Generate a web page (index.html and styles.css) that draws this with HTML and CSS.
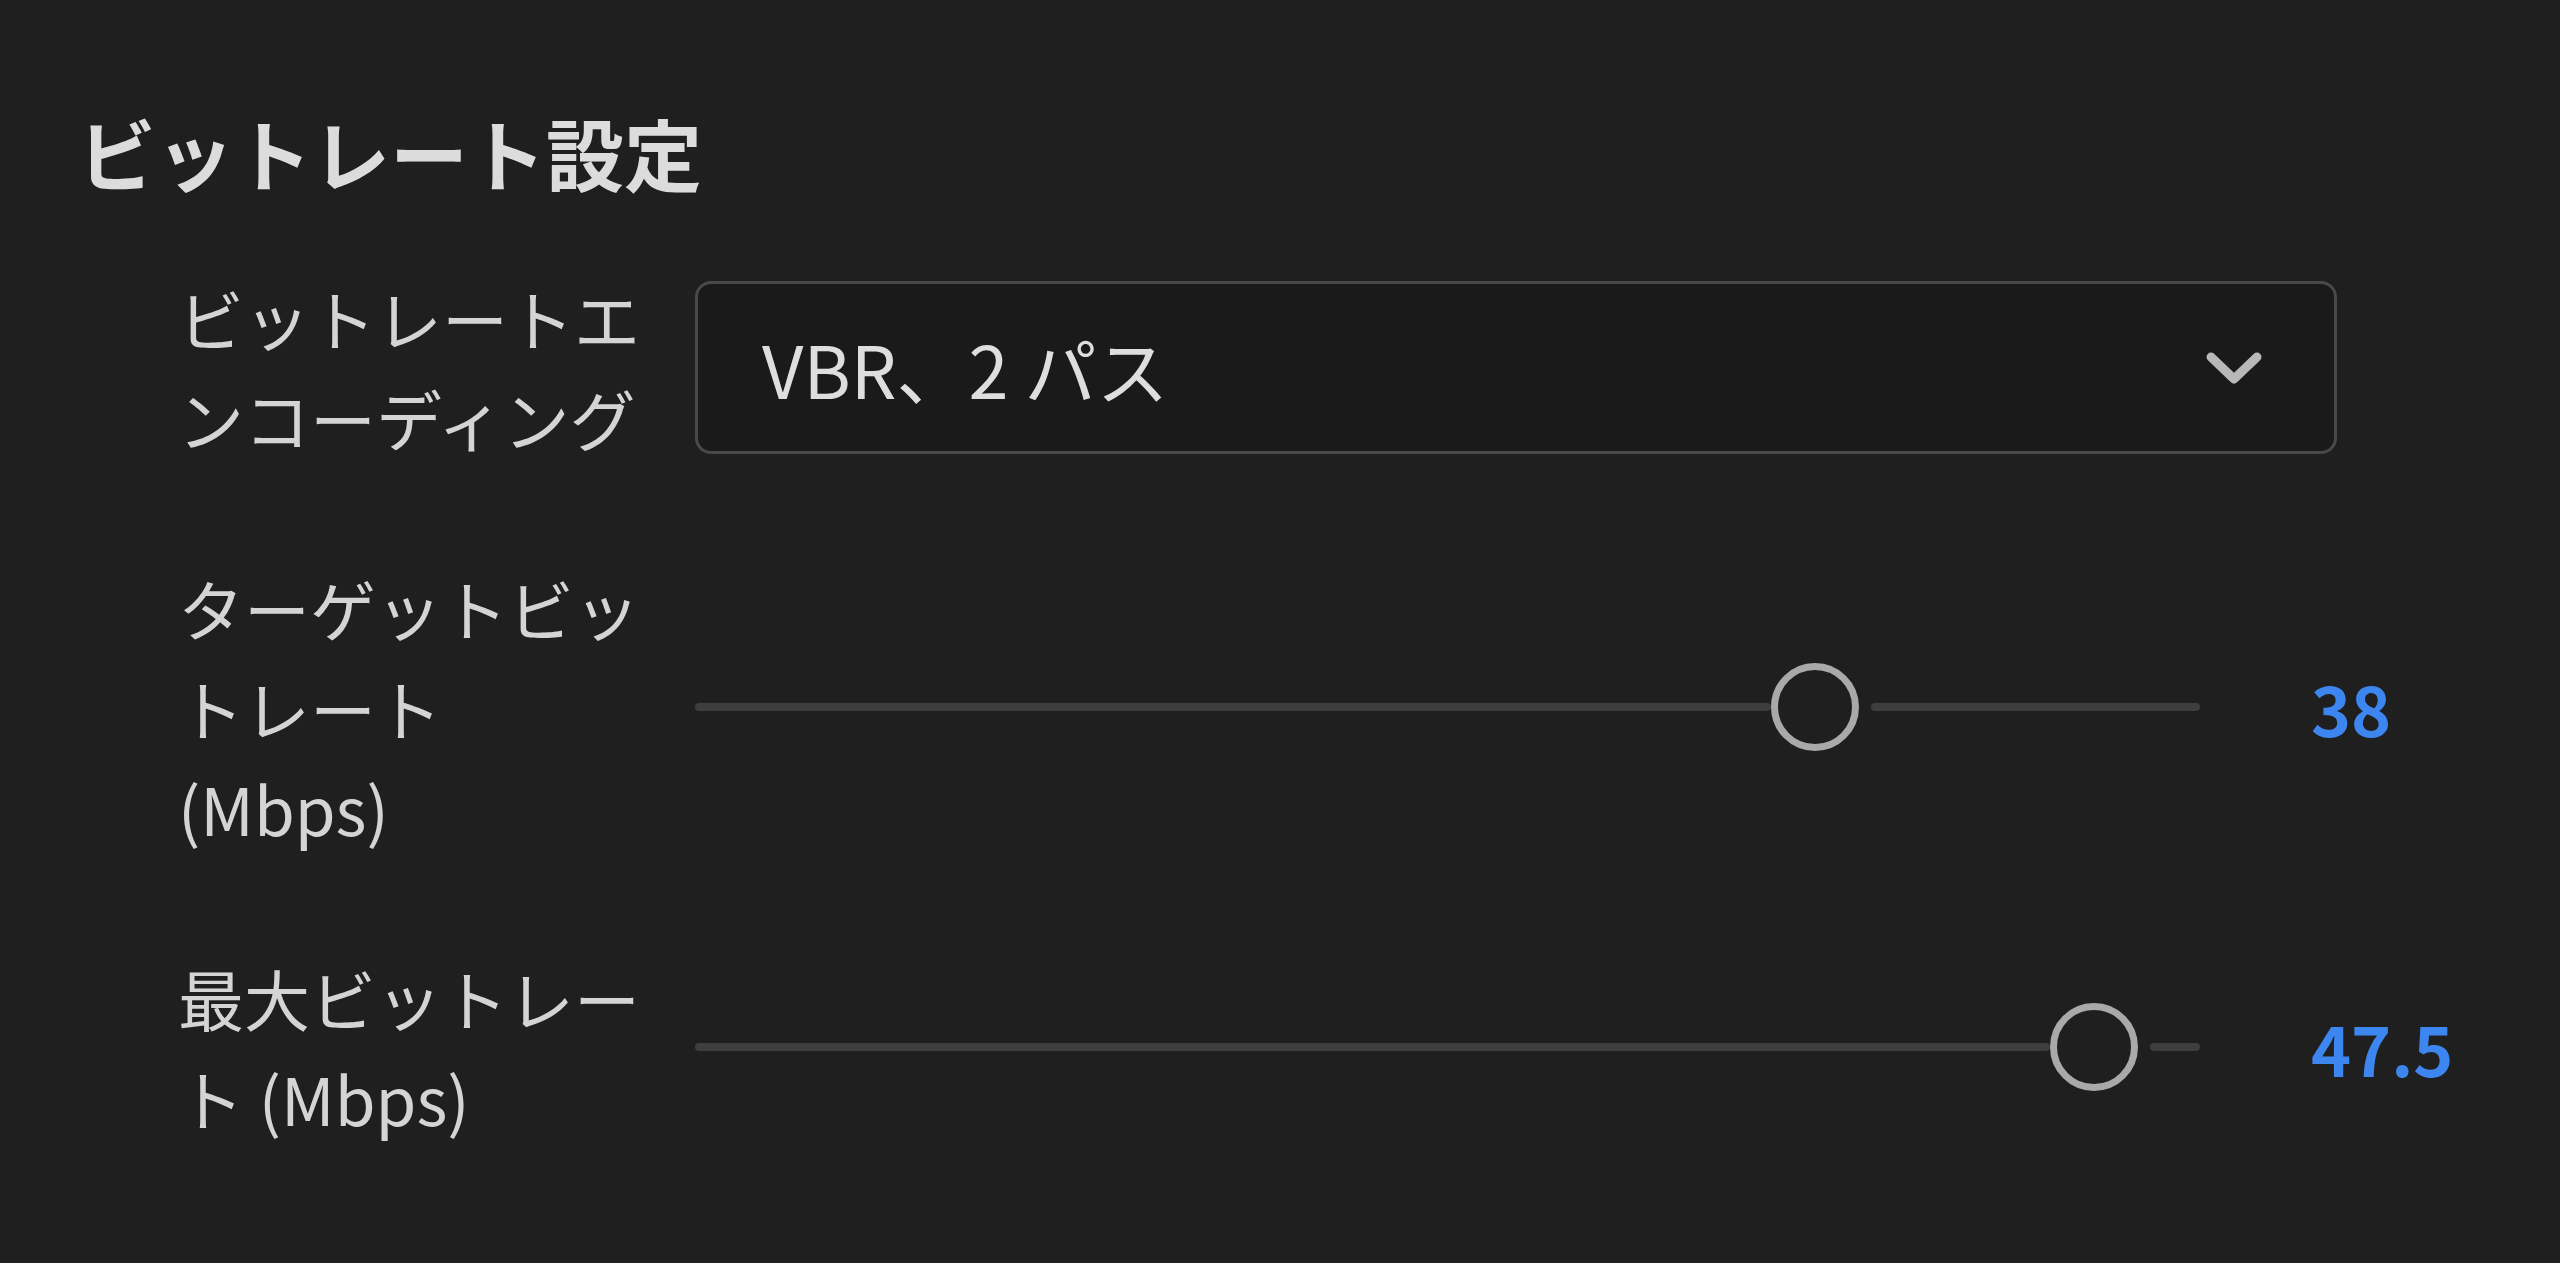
FILE: index.html
```html
<!DOCTYPE html>
<html lang="ja">
<head>
    <meta charset="UTF-8">
    <title>ビットレート設定</title>
    <link rel="stylesheet" href="styles.css">
</head>
<body>
    <h1 class="title">ビットレート設定</h1>
    <div class="rows">
        <div class="row">
            <div class="label">ビットレートエンコーディング</div>
            <div class="select">
                <span class="select-text">VBR、2 パス</span>
                <svg class="chevron" width="60" height="40" viewBox="0 0 60 40">
                    <polyline points="7,10 30,32 53,10" fill="none" stroke="#b8b8b8" stroke-width="9" stroke-linecap="round" stroke-linejoin="round"/>
                </svg>
            </div>
        </div>
        <div class="row">
            <div class="label">ターゲットビットレート (Mbps)</div>
            <div class="slider">
                <div class="track">
                    <div class="fill" style="width: 1076px"></div>
                    <div class="thumb"></div>
                    <div class="rest"></div>
                </div>
                <div class="value">38</div>
            </div>
        </div>
        <div class="row">
            <div class="label">最大ビットレート (Mbps)</div>
            <div class="slider">
                <div class="track">
                    <div class="fill" style="width: 1355px"></div>
                    <div class="thumb"></div>
                    <div class="rest"></div>
                </div>
                <div class="value">47.5</div>
            </div>
        </div>
    </div>
</body>
</html>
```

FILE: styles.css
```css
body { margin: 0; padding: 0; background: #1f1f1f; color: #d6d6d6; font-family: "Noto Sans CJK JP", "Noto Sans", sans-serif; }
.title { margin: 0; padding: 94px 0 0 78px; font-size: 78px; line-height: 117px; font-weight: 700; color: #dcdcdc; }
.rows { padding: 56px 0 0 178px; display: flex; flex-direction: column; gap: 90px; }
.row { display: flex; align-items: center; gap: 47px; }
.label { width: 470px; flex-shrink: 0; font-size: 66px; line-height: 100px; color: #d4d4d4; }
.select { width: 1642px; height: 173px; box-sizing: border-box; border: 3px solid #494949; border-radius: 16px; background: #1a1a1a; display: flex; align-items: center; justify-content: space-between; padding: 0 70px 0 64px; }
.select-text { font-size: 72px; color: #dedede; }
.chevron { display: block; }
.slider { display: flex; align-items: center; }
.track { width: 1505px; display: flex; align-items: center; }
.fill, .rest { height: 8px; border-radius: 4px; background: #3e3e3e; }
.rest { flex: 1; margin-left: 12px; }
.thumb { width: 88px; height: 88px; box-sizing: border-box; border: 7px solid #a9a9a9; border-radius: 50%; flex-shrink: 0; }
.value { margin-left: 111px; font-size: 68px; font-weight: 700; color: #3d86f0; }
```
